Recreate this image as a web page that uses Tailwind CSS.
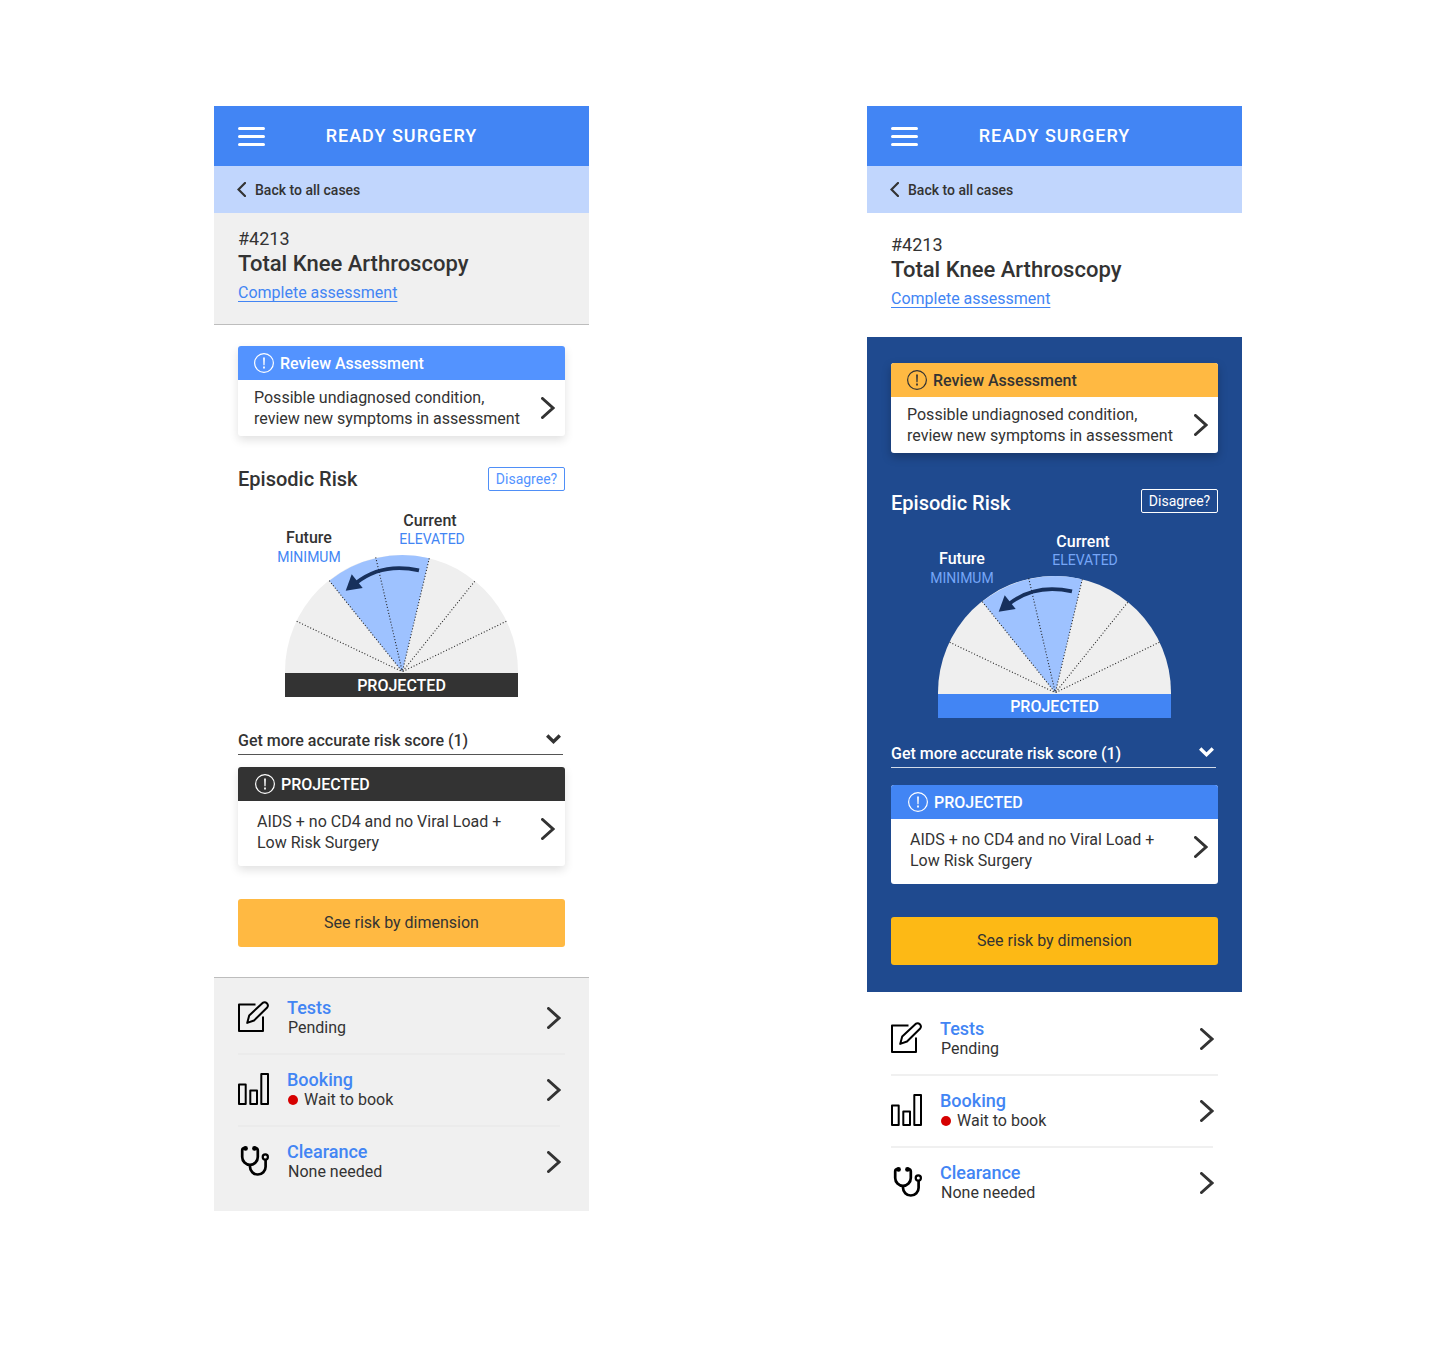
<!DOCTYPE html>
<html lang="en">
<head>
<meta charset="utf-8">
<meta name="viewport" content="width=device-width, initial-scale=1">
<title>Ready Surgery</title>
<script src="https://cdn.jsdelivr.net/npm/@tailwindcss/browser@4"></script>
</head>
<body class="bg-white font-['Roboto',sans-serif] text-base text-[#333333]">

<!-- Shared icons -->
<svg class="hidden" aria-hidden="true">
  <symbol id="menu" viewBox="0 0 27 19"><path d="M1.5 1.5h24M1.5 9.5h24M1.5 17.5h24" fill="none" stroke="currentColor" stroke-width="3" stroke-linecap="round"/></symbol>
  <symbol id="back" viewBox="0 0 9 15"><path d="M8 1 1.500 7.500 8 14" fill="none" stroke="currentColor" stroke-width="2.200" stroke-linecap="round"/></symbol>
  <symbol id="next" viewBox="0 0 14 22"><path d="M1.5 1.5 12 11 1.5 20.5" fill="none" stroke="currentColor" stroke-width="3" stroke-linecap="round"/></symbol>
  <symbol id="down" viewBox="0 0 15 10"><path d="M1.2 1.5 7.5 7.6l6.3-6.1" fill="none" stroke="currentColor" stroke-width="3.400"/></symbol>
  <symbol id="alert" viewBox="0 0 20 20"><circle cx="10" cy="10" r="9.4" fill="none" stroke="currentColor" stroke-width="1.2"/><path d="M9.1 4.5h1.8l-.3 7.8H9.4zM9.1 13.6h1.8v1.8H9.1z" fill="currentColor"/></symbol>
  <symbol id="edit" viewBox="0 0 31 34"><g fill="none" stroke="#000" stroke-width="2" stroke-linejoin="round"><path d="M17.500 3.500H1V30h24V15.500"/><path d="M9.2 21.900l2-7.400L24.600 1.900a3.300 3.300 0 0 1 4.600 4.600L16 19.500z"/></g></symbol>
  <symbol id="bars" viewBox="0 0 31 34"><path d="M1 11.500h6.700V31H1zM12.300 17.500H19V31h-6.700zM23.300 1H30v30h-6.700z" fill="none" stroke="#000" stroke-width="2" stroke-linejoin="round"/></symbol>
  <symbol id="stethoscope" viewBox="0 0 31 34"><g fill="none" stroke="#000" stroke-width="2.700"><path d="M7.500 3.200H6.500Q4.200 3.200 4.200 5.500V12a7.800 7.800 0 0 0 15.600 0V5.500Q19.800 3.200 17.500 3.200H16.500"/><path d="M12 20v1.700a7.800 7.800 0 0 0 15.600 0V15"/><circle cx="27.300" cy="12" r="2.600" stroke-width="2.200"/></g><circle cx="7.500" cy="3.400" r="2.400"/><circle cx="16.500" cy="3.400" r="2.400"/></symbol>
  <symbol id="gauge" viewBox="0 0 233 118">
    <path d="M0 118v-1.500a116.500 116.500 0 0 1 233 0V118z" fill="#efefef"/>
    <path d="M117.300 116.700 44.300 25.700A116.500 116.500 0 0 1 144.300 3.300z" fill="#9ec2ff"/>
    <path d="M11.700 66.300l105.600 50.400M44.300 25.700l73 91M90.700 2.300l26.600 114.400M144.300 3.300l-27 113.400M189.700 26.300l-72.400 90.400M221.300 66.300l-104 50.400" fill="none" stroke="#222" stroke-width="1.100" stroke-dasharray="1 2"/>
    <path d="M134 15.400C112 10.500 90 13 71 28" fill="none" stroke="#17305c" stroke-width="3.800"/>
    <path d="M60.700 35.700l6-16.400 11 13.700z" fill="#17305c"/>
  </symbol>
</svg>

<main class="flex flex-wrap justify-center gap-x-[278px] gap-y-12 py-[106px] pl-px">

  <!-- Light theme -->
  <article class="w-full max-w-[375px]">
    <header class="grid h-15 grid-cols-[27px_1fr_27px] items-center bg-[#4285f4] px-6 text-white">
      <button type="button" aria-label="Menu"><svg class="h-[19px] w-[27px]"><use href="#menu"/></svg></button>
      <h1 class="text-center text-lg leading-[30px] font-medium tracking-[1px]">READY SURGERY</h1>
    </header>
    <a href="#cases" class="flex h-[47px] items-center gap-[9px] bg-[#c1d6fd] px-[23px] text-sm font-medium"><svg class="h-[15px] w-[9px]"><use href="#back"/></svg>Back to all cases</a>
    <section class="border-b border-[#bdbdbd] bg-[#f0f0f0] px-6 pt-4 pb-[17px]">
      <p class="text-lg leading-5">#4213</p>
      <h2 class="text-[22px] leading-[30px] font-medium">Total Knee Arthroscopy</h2>
      <a href="#assessment" class="block leading-7 text-[#4285f4] underline underline-offset-3">Complete assessment</a>
    </section>

    <section class="border-b border-[#bdbdbd] px-6 pt-[21px] pb-[30px]">
      <a href="#review" class="block overflow-hidden rounded-[3px] bg-white shadow-[0_4px_10px_rgba(0,0,0,0.12)]">
        <span class="flex h-[34px] items-center gap-[6px] bg-[#5393ff] px-4 leading-[25px] font-medium text-white"><svg class="size-5"><use href="#alert"/></svg>Review Assessment</span>
        <span class="flex items-center justify-between py-[7px] pr-[10px] pl-4 leading-[21px]"><span>Possible undiagnosed condition,<br>review new symptoms in assessment</span><svg class="h-[22px] w-[14px]"><use href="#next"/></svg></span>
      </a>

      <div class="mt-[31px] flex items-start justify-between">
        <h3 class="text-xl leading-6 font-medium">Episodic Risk</h3>
        <button type="button" class="h-6 w-[77px] rounded-[2px] border border-[#4f8ff7] text-sm leading-5 text-[#5393ff]">Disagree?</button>
      </div>

      <figure class="relative mx-auto mt-5 w-[233px] pt-11">
        <p class="absolute top-[17px] -left-2 w-16 text-center leading-[19px] font-medium">Future<span class="block text-sm leading-[21px] font-normal text-[#4285f4]">MINIMUM</span></p>
        <p class="absolute top-0 left-[110px] w-[70px] text-center leading-[19px] font-medium">Current<span class="block pl-1 text-sm leading-[19px] font-normal text-[#4285f4]">ELEVATED</span></p>
        <svg class="block h-[118px] w-[233px]" role="img" aria-label="Risk moving from elevated to minimum"><use href="#gauge"/></svg>
        <figcaption class="h-6 bg-[#333333] text-center leading-[26px] font-medium text-white">PROJECTED</figcaption>
      </figure>

      <button type="button" class="mt-[31px] flex w-[325px] items-center justify-between border-b border-[#555555] pr-[2px] leading-[26px] font-medium">Get more accurate risk score (1)<svg class="mb-1 h-[10px] w-[15px]"><use href="#down"/></svg></button>

      <a href="#projected" class="mt-3 block overflow-hidden rounded-[3px] bg-white shadow-[0_4px_10px_rgba(0,0,0,0.12)]">
        <span class="flex h-[34px] items-center gap-[6px] bg-[#333333] px-[17px] leading-[25px] font-medium text-white"><svg class="size-5"><use href="#alert"/></svg>PROJECTED</span>
        <span class="flex items-start justify-between pt-[10px] pr-[10px] pb-[13px] pl-[19px] leading-[21px]"><span>AIDS + no CD4 and no Viral Load +<br>Low Risk Surgery</span><svg class="mt-[7px] h-[22px] w-[14px]"><use href="#next"/></svg></span>
      </a>

      <button type="button" class="mt-[33px] h-12 w-full rounded-[3px] bg-[#ffb942]">See risk by dimension</button>
    </section>

    <nav aria-label="Case steps" class="bg-[#f0f0f0] px-6 pt-[5px] pb-[14px]">
      <a href="#tests" class="flex h-[70px] items-center gap-[18px] pr-1">
        <svg class="h-[34px] w-[31px]"><use href="#edit"/></svg>
        <span class="flex-1 leading-5"><span class="block text-lg leading-5 font-medium text-[#4285f4]">Tests</span><span class="block pl-px">Pending</span></span>
        <svg class="h-[22px] w-[14px]"><use href="#next"/></svg>
      </a>
      <hr class="border-t-2 border-[#ebebeb]">
      <a href="#booking" class="flex h-[70px] items-center gap-[18px] pr-1">
        <svg class="h-[34px] w-[31px]"><use href="#bars"/></svg>
        <span class="flex-1 leading-5"><span class="block text-lg leading-5 font-medium text-[#4285f4]">Booking</span><span class="flex items-center gap-[6px] pl-px"><span class="size-[10px] rounded-full bg-[#d60000]"></span>Wait to book</span></span>
        <svg class="h-[22px] w-[14px]"><use href="#next"/></svg>
      </a>
      <hr class="mr-[5px] border-t-2 border-[#ebebeb]">
      <a href="#clearance" class="flex h-[70px] items-center gap-[18px] pr-1">
        <svg class="h-[34px] w-[31px]"><use href="#stethoscope"/></svg>
        <span class="flex-1 leading-5"><span class="block text-lg leading-5 font-medium text-[#4285f4]">Clearance</span><span class="block pl-px">None needed</span></span>
        <svg class="h-[22px] w-[14px]"><use href="#next"/></svg>
      </a>
    </nav>
  </article>

  <!-- Blue theme -->
  <article class="w-full max-w-[375px]">
    <header class="grid h-15 grid-cols-[27px_1fr_27px] items-center bg-[#4285f4] px-6 text-white">
      <button type="button" aria-label="Menu"><svg class="h-[19px] w-[27px]"><use href="#menu"/></svg></button>
      <h1 class="text-center text-lg leading-[30px] font-medium tracking-[1px]">READY SURGERY</h1>
    </header>
    <a href="#cases" class="flex h-[47px] items-center gap-[9px] bg-[#c1d6fd] px-[23px] text-sm font-medium"><svg class="h-[15px] w-[9px]"><use href="#back"/></svg>Back to all cases</a>
    <section class="px-6 pt-[22px] pb-6">
      <p class="text-lg leading-5">#4213</p>
      <h2 class="text-[22px] leading-[30px] font-medium">Total Knee Arthroscopy</h2>
      <a href="#assessment" class="block leading-7 text-[#4285f4] underline underline-offset-3">Complete assessment</a>
    </section>

    <section class="bg-[#1f4a8f] px-6 pt-[26px] pb-[27px] text-white">
      <a href="#review" class="block overflow-hidden rounded-[3px] bg-white text-[#333333] shadow-[0_4px_10px_rgba(0,0,0,0.25)]">
        <span class="flex h-[34px] items-center gap-[6px] bg-[#ffb942] px-4 leading-[25px] font-medium"><svg class="size-5"><use href="#alert"/></svg>Review Assessment</span>
        <span class="flex items-center justify-between py-[7px] pr-[10px] pl-4 leading-[21px]"><span>Possible undiagnosed condition,<br>review new symptoms in assessment</span><svg class="h-[22px] w-[14px]"><use href="#next"/></svg></span>
      </a>

      <div class="mt-9 flex items-start justify-between">
        <h3 class="text-xl leading-7 font-medium">Episodic Risk</h3>
        <button type="button" class="h-6 w-[77px] rounded-[2px] border border-white text-sm leading-5">Disagree?</button>
      </div>

      <figure class="relative mx-auto mt-[15px] w-[233px] pt-11">
        <p class="absolute top-[17px] -left-2 w-16 text-center leading-[19px] font-medium">Future<span class="block text-sm leading-[21px] font-normal text-[#76a6f7]">MINIMUM</span></p>
        <p class="absolute top-0 left-[110px] w-[70px] text-center leading-[19px] font-medium">Current<span class="block pl-1 text-sm leading-[19px] font-normal text-[#76a6f7]">ELEVATED</span></p>
        <svg class="block h-[118px] w-[233px]" role="img" aria-label="Risk moving from elevated to minimum"><use href="#gauge"/></svg>
        <figcaption class="h-6 bg-[#4285f4] text-center leading-[26px] font-medium">PROJECTED</figcaption>
      </figure>

      <button type="button" class="mt-[23px] flex w-[325px] items-center justify-between border-b border-[#d2dbe9] pr-[2px] leading-[26px] font-medium">Get more accurate risk score (1)<svg class="mb-1 h-[10px] w-[15px]"><use href="#down"/></svg></button>

      <a href="#projected" class="mt-[17px] block overflow-hidden rounded-[3px] bg-white text-[#333333]">
        <span class="flex h-[34px] items-center gap-[6px] bg-[#4285f4] px-[17px] leading-[25px] font-medium text-white"><svg class="size-5"><use href="#alert"/></svg>PROJECTED</span>
        <span class="flex items-start justify-between pt-[10px] pr-[10px] pb-[13px] pl-[19px] leading-[21px]"><span>AIDS + no CD4 and no Viral Load +<br>Low Risk Surgery</span><svg class="mt-[7px] h-[22px] w-[14px]"><use href="#next"/></svg></span>
      </a>

      <button type="button" class="mt-[33px] h-12 w-full rounded-[3px] bg-[#fdb915] text-[#333333]">See risk by dimension</button>
    </section>

    <nav aria-label="Case steps" class="px-6 pt-3">
      <a href="#tests" class="flex h-[70px] items-center gap-[18px] pr-1">
        <svg class="h-[34px] w-[31px]"><use href="#edit"/></svg>
        <span class="flex-1 leading-5"><span class="block text-lg leading-5 font-medium text-[#4285f4]">Tests</span><span class="block pl-px">Pending</span></span>
        <svg class="h-[22px] w-[14px]"><use href="#next"/></svg>
      </a>
      <hr class="border-t-2 border-[#f0f0f0]">
      <a href="#booking" class="flex h-[70px] items-center gap-[18px] pr-1">
        <svg class="h-[34px] w-[31px]"><use href="#bars"/></svg>
        <span class="flex-1 leading-5"><span class="block text-lg leading-5 font-medium text-[#4285f4]">Booking</span><span class="flex items-center gap-[6px] pl-px"><span class="size-[10px] rounded-full bg-[#d60000]"></span>Wait to book</span></span>
        <svg class="h-[22px] w-[14px]"><use href="#next"/></svg>
      </a>
      <hr class="mr-[5px] border-t-2 border-[#f0f0f0]">
      <a href="#clearance" class="flex h-[70px] items-center gap-[18px] pr-1">
        <svg class="h-[34px] w-[31px]"><use href="#stethoscope"/></svg>
        <span class="flex-1 leading-5"><span class="block text-lg leading-5 font-medium text-[#4285f4]">Clearance</span><span class="block pl-px">None needed</span></span>
        <svg class="h-[22px] w-[14px]"><use href="#next"/></svg>
      </a>
    </nav>
  </article>
</main>
</body>
</html>
